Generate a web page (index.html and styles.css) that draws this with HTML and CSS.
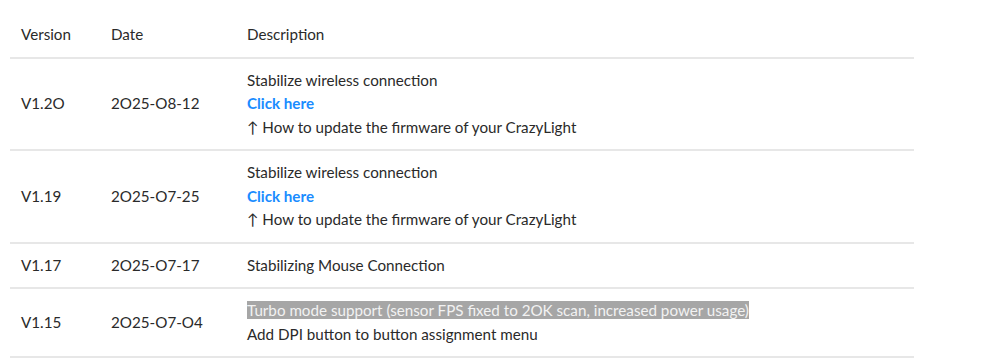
FILE: index.html
```html
<!DOCTYPE html>
<html lang="en">
<head>
    <meta charset="UTF-8">
    <meta name="viewport" content="width=device-width, initial-scale=1.0">
    <title>Firmware History</title>
    <link rel="stylesheet" href="styles.css">
</head>
<body>
    <div class="container">
        <table class="fw-table">
            <thead>
                <tr>
                    <th class="col-version">Version</th>
                    <th class="col-date">Date</th>
                    <th>Description</th>
                </tr>
            </thead>
            <tbody>
                <tr>
                    <td>V1.2O</td>
                    <td>2O25-O8-12</td>
                    <td>
                        <p>Stabilize wireless connection</p>
                        <p><a href="#" class="link">Click here</a></p>
                        <p>↑ How to update the firmware of your CrazyLight</p>
                    </td>
                </tr>
                <tr>
                    <td>V1.19</td>
                    <td>2O25-O7-25</td>
                    <td>
                        <p>Stabilize wireless connection</p>
                        <p><a href="#" class="link">Click here</a></p>
                        <p>↑ How to update the firmware of your CrazyLight</p>
                    </td>
                </tr>
                <tr>
                    <td>V1.17</td>
                    <td>2O25-O7-17</td>
                    <td>
                        <p>Stabilizing Mouse Connection</p>
                    </td>
                </tr>
                <tr>
                    <td>V1.15</td>
                    <td>2O25-O7-O4</td>
                    <td>
                        <p><span class="selected">Turbo mode support (sensor FPS fixed to 2OK scan, increased power usage)</span></p>
                        <p>Add DPI button to button assignment menu</p>
                    </td>
                </tr>
            </tbody>
        </table>
    </div>
</body>
</html>
```

FILE: styles.css
```css
* {
    box-sizing: border-box;
    margin: 0;
    padding: 0;
}

body {
    font-family: 'Lato', 'Liberation Sans', sans-serif;
    background: #fff;
    color: #2a2a2a;
    font-size: 15.2px;
}

.container {
    padding: 11px 0 0 10px;
    width: 914px;
}

.fw-table {
    width: 100%;
    border-collapse: collapse;
}

.fw-table th,
.fw-table td {
    text-align: left;
    vertical-align: middle;
    font-weight: 400;
    line-height: 23.5px;
    padding: 10px 11px 10px;
    border-bottom: 2px solid #e7e7e7;
}

.fw-table th {
    padding: 12px 11px 10px;
}

.col-version {
    width: 90px;
}

.col-date {
    width: 136px;
}

.link {
    color: #1a8cff;
    font-weight: 700;
    text-decoration: none;
}

.selected {
    background: #a6a6a6;
    color: #f2f2f2;
}
```
